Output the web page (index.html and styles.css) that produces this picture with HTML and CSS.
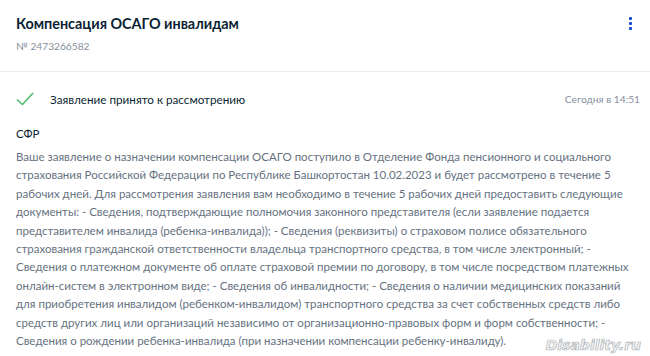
FILE: index.html
```html
<!DOCTYPE html>
<html lang="ru">
<head>
    <meta charset="UTF-8">
    <title>Компенсация ОСАГО инвалидам</title>
    <link rel="stylesheet" href="styles.css">
</head>
<body>
    <div class="card">
        <div class="card-head">
            <div class="head-text">
                <h1 class="title">Компенсация ОСАГО инвалидам</h1>
                <div class="number">№ 2473266582</div>
            </div>
            <button class="kebab" aria-label="Меню">
                <span></span><span></span><span></span>
            </button>
        </div>

        <div class="event">
            <div class="status">
                <svg class="check" width="18" height="14" viewBox="0 0 18 14">
                    <path d="M1 7.5 L6.5 12.5 L17 1" fill="none" stroke="#47b665" stroke-width="1.4"/>
                </svg>
                <span class="status-text">Заявление принято к рассмотрению</span>
                <span class="time">Сегодня в 14:51</span>
            </div>

            <div class="sender">СФР</div>
            <p class="message">Ваше заявление о назначении компенсации ОСАГО поступило в Отделение Фонда пенсионного и социального страхования Российской Федерации по Республике Башкортостан 10.02.2023 и будет рассмотрено в течение 5 рабочих дней. Для рассмотрения заявления вам необходимо в течение 5 рабочих дней предоставить следующие документы: - Сведения, подтверждающие полномочия законного представителя (если заявление подается представителем инвалида (ребенка-инвалида)); - Сведения (реквизиты) о страховом полисе обязательного страхования гражданской ответственности владельца транспортного средства, в том числе электронный; - Сведения о платежном документе об оплате страховой премии по договору, в том числе посредством платежных онлайн-систем в электронном виде; - Сведения об инвалидности; - Сведения о наличии медицинских показаний для приобретения инвалидом (ребенком-инвалидом) транспортного средства за счет собственных средств либо средств других лиц или организаций независимо от организационно-правовых форм и форм собственности; - Сведения о рождении ребенка-инвалида (при назначении компенсации ребенку-инвалиду).</p>
        </div>
    </div>
    <div class="watermark">Disability.ru</div>
</body>
</html>
```

FILE: styles.css
```css
body {
    margin: 0;
    font-family: Lato, "Noto Sans", sans-serif;
    background-color: #ffffff;
    color: #0b1f33;
    width: 650px;
    height: 356px;
    overflow: hidden;
    position: relative;
}

.card {
    background-color: #ffffff;
}

.card-head {
    display: flex;
    justify-content: space-between;
    align-items: flex-start;
    padding: 14px 10px 0 16px;
    height: 57px;
    border-bottom: 1px solid #e6ebf0;
}

.title {
    margin: 0;
    font-size: 14.4px;
    font-weight: 700;
    line-height: 20px;
    color: #0b1f33;
}

.number {
    margin-top: 5px;
    font-size: 10.2px;
    line-height: 14px;
    color: #86909c;
}

.kebab {
    display: flex;
    flex-direction: column;
    gap: 2px;
    background: none;
    border: none;
    padding: 0;
    margin-top: 3px;
    margin-right: 8px;
    cursor: pointer;
}

.kebab span {
    width: 3px;
    height: 3px;
    background-color: #0d4cd3;
    border-radius: 1px;
}

.event {
    padding: 18px 16px 0 16px;
}

.status {
    display: flex;
    align-items: center;
    height: 18px;
    margin-right: -6px;
}

.check {
    margin-right: 16px;
}

.status-text {
    font-size: 11.7px;
    color: #0b1f33;
    flex-grow: 1;
}

.time {
    font-size: 10.2px;
    color: #86909c;
}

.sender {
    margin-top: 17px;
    font-size: 11.5px;
    line-height: 18px;
    color: #0b1f33;
}

.message {
    margin: 5px 0 0 0;
    font-size: 11.5px;
    line-height: 18.4px;
    color: #66727f;
}

.watermark {
    position: absolute;
    right: 9px;
    bottom: 3px;
    font-family: "DejaVu Sans", sans-serif;
    font-style: italic;
    font-weight: 700;
    font-size: 14px;
    color: #f4f5f6;
    -webkit-text-stroke: 0.7px #aeb2b6;
}
```
